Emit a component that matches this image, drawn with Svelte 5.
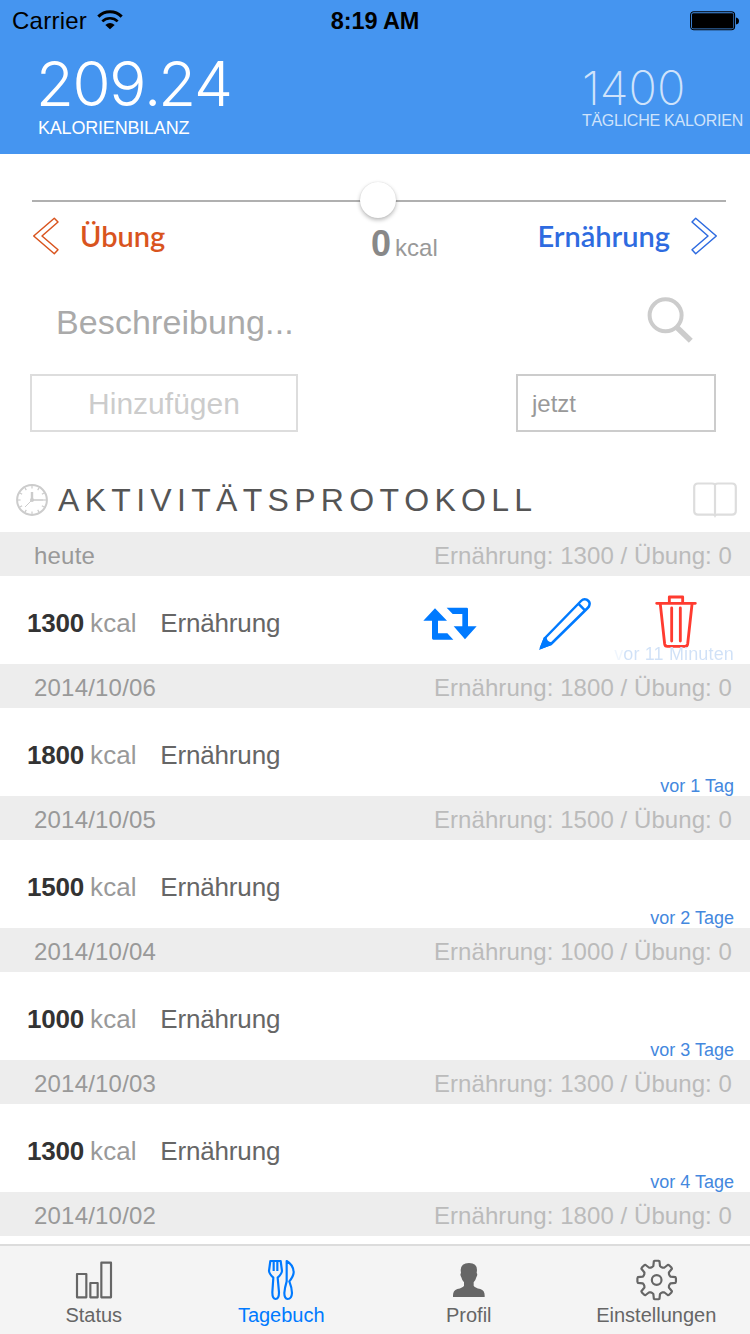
<script>
  const days = [
    { date: 'heute', total: 1300, ago: 'vor 11 Minuten', open: true },
    { date: '2014/10/06', total: 1800, ago: 'vor 1 Tag' },
    { date: '2014/10/05', total: 1500, ago: 'vor 2 Tage' },
    { date: '2014/10/04', total: 1000, ago: 'vor 3 Tage' },
    { date: '2014/10/03', total: 1300, ago: 'vor 4 Tage' },
    { date: '2014/10/02', total: 1800, ago: '' }
  ];
  const ticks = Array.from({ length: 12 }, (_, i) => i * 30);

  // Eight-toothed gear outline, described by points per tooth (radius, angle offset).
  const tooth = [[41, -19], [43, -13.5], [57, -8.5], [58, -5], [58, 5], [57, 8.5], [43, 13.5], [41, 19]];
  const gear = 'M' + Array.from({ length: 8 }, (_, i) =>
    tooth.map(([r, a]) => {
      const t = ((i * 45 + a) * Math.PI) / 180;
      return (60 + r * Math.sin(t)).toFixed(1) + ' ' + (60 - r * Math.cos(t)).toFixed(1);
    }).join('L')
  ).join('L') + 'Z';
</script>

<div class="screen">
  <header>
    <div class="status">
      <div class="carrier">
        <span>Carrier</span>
        <svg width="26" height="20" viewBox="0 0 78 60">
          <path d="M4 20A49 49 0 0 1 74 20" fill="none" stroke="#000" stroke-width="9" />
          <path d="M16 34A33 33 0 0 1 62 34" fill="none" stroke="#000" stroke-width="8" />
          <path d="M25 45Q39 33 53 45L39 58Z" />
        </svg>
      </div>
      <span class="clock">8:19 AM</span>
      <svg class="battery" width="50" height="20" viewBox="0 0 50 20">
        <rect x=".6" y=".8" width="44" height="18" rx="3.2" fill="none" stroke="#000" stroke-width="1.1" />
        <rect x="2" y="2.2" width="41.4" height="15.4" rx="1.4" />
        <path d="M46 6.5Q49 7 49 10Q49 13 46 13.5Z" />
      </svg>
    </div>
    <div class="totals">
      <div class="balance">
        <strong>209.24</strong>
        <span>KALORIENBILANZ</span>
      </div>
      <div class="daily">
        <strong>1400</strong>
        <span>TÄGLICHE KALORIEN</span>
      </div>
    </div>
  </header>

  <section class="entry">
    <div class="slider"><i></i></div>
    <div class="modes">
      <div class="mode exercise">
        <svg width="28" height="38" viewBox="0 0 28 38"><path d="M1.7 19L22.3 1.3L26 5L10 19L26 32.8L22.3 36.7Z" /></svg>
        <span>Übung</span>
      </div>
      <div class="amount"><b>0</b><span>kcal</span></div>
      <div class="mode food">
        <span>Ernährung</span>
        <svg width="28" height="38" viewBox="0 0 28 38"><path d="M26.3 19L5.7 1.3L2 5L18 19L2 32.8L5.7 36.7Z" /></svg>
      </div>
    </div>
    <div class="search">
      <span>Beschreibung...</span>
      <svg width="46" height="46" viewBox="0 0 46 46" fill="none" stroke="#ccc">
        <circle cx="18.6" cy="18.3" r="16" stroke-width="4" />
        <path d="M29.5 30L43.8 43.8" stroke-width="5.6" />
      </svg>
    </div>
    <div class="actions">
      <button class="add">Hinzufügen</button>
      <div class="when">jetzt</div>
    </div>
  </section>

  <div class="title">
    <svg width="32" height="32" viewBox="0 0 32 32" fill="none" stroke="#ccc">
      <circle cx="16" cy="16" r="14.9" stroke-width="2" />
      {#each ticks as a}
        <path d="M16 2V4.6" stroke-width="1.2" transform={`rotate(${a} 16 16)`} />
      {/each}
      <path d="M16 8V16" stroke-width="2.4" />
      <path d="M16 16H27.5" stroke-width="1.6" />
      <path d="M16 16L9 23" stroke-width="1" />
      <circle cx="16" cy="16" r="2" fill="#ccc" stroke="none" />
    </svg>
    <h1>AKTIVITÄTSPROTOKOLL</h1>
    <svg class="book" width="44" height="36" viewBox="0 0 44 36" fill="none" stroke="#ddd" stroke-width="2.2">
      <path d="M22 2.6Q21 1.5 19 1.5H5Q1.2 1.5 1.2 5.3V29Q1.2 32.6 5 32.6H20Q21.5 32.6 22 33.6Q22.5 32.6 24 32.6H39Q42.8 32.6 42.8 29V5.3Q42.8 1.5 39 1.5H25Q23 1.5 22 2.6V34" />
    </svg>
  </div>

  <main>
    {#each days as day}
      <div class="day">
        <span class="date">{day.date}</span>
        <span class="sum">Ernährung: {day.total} / Übung: 0</span>
      </div>
      {#if day.ago}
        <div class="row">
          <b>{day.total}</b><span class="unit">kcal</span><span class="kind">Ernährung</span>
          {#if day.open}
            <div class="tools">
              <svg width="54" height="34" viewBox="69 82 162 102" fill="#007aff">
                <path d="M105 86L70 123H96V176Q96 180 100 180H160L142 161H114V123H141Z" />
                <path d="M140 84H200Q204 84 204 88V140H230L195 179L161 140H187V103H158Z" />
              </svg>
              <svg width="54" height="54" viewBox="411 51 162 162" fill="none" stroke="#007aff" stroke-width="7.5" stroke-linejoin="round">
                <path d="M420 203L432 174L540 63Q548 55 557 59Q569 66 565 76Q564 80 560 84L450 192Z" />
                <path d="M532 71L552 91" />
                <path d="M414 210L429 171L437 171Q437 186 452 187L451 195Z" fill="#007aff" stroke="none" />
              </svg>
              <svg class="bin" width="42" height="54" viewBox="765 46 126 162" fill="none" stroke="#ff3b30" stroke-width="8.5" stroke-linecap="round" stroke-linejoin="round">
                <path d="M770 71H886M808 70V52H848V70" />
                <path d="M781 74L794 193Q795 200 802 200H855Q862 200 863 193L876 74" />
                <path d="M815 85V184M841 85V184" />
              </svg>
            </div>
          {/if}
          <span class="ago" class:faded={day.open}>{day.ago}</span>
        </div>
      {/if}
    {/each}
  </main>

  <nav>
    <div class="tab">
      <svg width="40" height="40" viewBox="222 210 120 120" fill="none" stroke="#666" stroke-width="6.5" stroke-linejoin="round">
        <path d="M231 252H259V322H231ZM271 279H293V322H271ZM304 218H333V322H304Z" />
      </svg>
      <span>Status</span>
    </div>
    <div class="tab active">
      <svg width="40" height="40" viewBox="784 210 120 120" fill="none" stroke="#007aff" stroke-width="6.5" stroke-linejoin="round">
        <path d="M812 213H843L847 243Q846 252 834 263L838 307Q838 327 828 327Q818 327 818 307L821 263Q809 252 808 243Z" />
        <path d="M822 213V243M833 213V243" />
        <path d="M861 213Q882 225 882 248Q881 260 869 274Q877 294 877 309Q876 327 864 327Q854 326 854 309Q855 294 861 274Z" />
      </svg>
      <span>Tagebuch</span>
    </div>
    <div class="tab">
      <svg width="40" height="40" viewBox="222 210 120 120" fill="#666">
        <path d="M282 219Q306 219 306 240L305 249Q309 253 304 262Q302 271 296 277V287Q299 293 316 297Q330 301 329 320Q329 321 327 321H236Q234 321 234 320Q233 301 247 297Q264 293 267 287V277Q261 271 259 262Q254 253 258 249L257 240Q258 219 282 219Z" />
      </svg>
      <span>Profil</span>
    </div>
    <div class="tab">
      <svg width="40" height="40" viewBox="-2 0 120 120" fill="none" stroke="#666" stroke-width="6.5" stroke-linejoin="round">
        <path d={gear} />
        <circle cx="60" cy="60" r="14.5" />
      </svg>
      <span>Einstellungen</span>
    </div>
  </nav>
</div>

<style>
  :global(body) { margin: 0; background: #fff; }
  .screen {
    width: 750px;
    height: 1334px;
    overflow: hidden;
    display: flex;
    flex-direction: column;
    font-family: "Liberation Sans", Arial, sans-serif;
    background: #fff;
  }
  svg { display: block; flex: none; overflow: visible; }
  header { height: 154px; flex: none; background: #4595f0; color: #fff; }
  .status {
    height: 40px;
    box-sizing: border-box;
    padding: 2px 10px 0 12px;
    display: grid;
    grid-template-columns: 1fr auto 1fr;
    align-items: center;
    color: #000;
    font-size: 24px;
  }
  .carrier { display: flex; align-items: center; gap: 10px; letter-spacing: 0.25px; }
  .carrier svg { margin-top: -2px; }
  .clock { font-weight: 700; letter-spacing: -0.1px; font-size: 23.5px; margin-left: -2px; }
  .battery { justify-self: end; margin-top: -1px; }
  .totals { display: flex; justify-content: space-between; padding: 0 7px 0 38px; }
  .totals div { display: flex; flex-direction: column; }
  .totals strong { font-family: Inter, "Liberation Sans", sans-serif; font-weight: 300; }
  .balance strong { font-size: 62px; line-height: 62px; letter-spacing: -3.7px; padding-top: 13px; margin-left: -3px; font-variant-numeric: tabular-nums; }
  .balance span { font-size: 18px; line-height: 24px; letter-spacing: -0.2px; margin-top: 1px; }
  .daily { color: #cfe3fb; }
  .daily strong { font-size: 47px; line-height: 48px; letter-spacing: 0; padding-top: 24px; font-weight: 200; }
  .daily span { font-size: 16px; line-height: 20px; letter-spacing: -0.25px; margin-top: -1px; }

  .entry { height: 318px; flex: none; padding: 0 30px; box-sizing: border-box; }
  .slider { height: 64px; padding-top: 28px; box-sizing: border-box; display: grid; justify-items: center; margin: 0 -6px 0 2px; }
  .slider::before { content: ""; grid-area: 1 / 1; width: 694px; height: 2px; background: #b0b0b0; margin-top: 18px; }
  .slider i {
    grid-area: 1 / 1;
    width: 36px;
    height: 36px;
    border-radius: 50%;
    background: #fff;
    box-shadow: 0 2px 4px rgba(0, 0, 0, 0.28), 0 0 1px rgba(0, 0, 0, 0.15);
    position: relative;
    left: -1px;
  }
  .modes { display: grid; grid-template-columns: 339px auto 1fr; align-items: start; height: 38px; padding: 0 2px; margin-top: -1px; }
  .mode { display: flex; align-items: center; gap: 20px; height: 38px; font: 600 29px/38px Lato, sans-serif; }
  .mode path { fill: none; stroke: currentColor; stroke-width: 1.5; stroke-linejoin: round; }
  .exercise { color: #d9541e; }
  .food { color: #2e6be0; justify-content: flex-end; }
  .amount { display: flex; align-items: baseline; gap: 4px; line-height: 54px; color: #999; font-size: 24px; }
  .amount b { font-size: 36px; color: #888; }
  .search { display: flex; justify-content: space-between; align-items: center; padding: 0 27px 0 26px; height: 46px; margin-top: 42px; color: #aaa; font-size: 34px; }
  .search span { padding-top: 4px; letter-spacing: 0.1px; }
  .actions { display: flex; justify-content: space-between; padding-right: 4px; margin-top: 31px; }
  .add, .when { box-sizing: border-box; height: 58px; border: 2px solid #ddd; background: #fff; font-family: inherit; line-height: 56px; padding: 0; }
  .add { width: 268px; font-size: 30px; color: #ccc; }
  .when { width: 200px; border-color: #ccc; padding-left: 14px; font-size: 24px; color: #999; }

  .title { height: 60px; flex: none; display: flex; align-items: center; padding: 0 13px 5px 16px; box-sizing: border-box; }
  .title h1 { margin: 1px 0 0 10px; font-size: 32px; font-weight: 400; letter-spacing: 5.3px; font-kerning: none; color: #555; line-height: 40px; }
  .book { margin-left: auto; }

  main { flex: 1; min-height: 0; overflow: hidden; }
  .day { height: 44px; background: #ededed; display: flex; justify-content: space-between; padding: 0 18px 0 34px; font-size: 24px; line-height: 47px; color: #999; }
  .date { letter-spacing: 0.2px; }
  .sum { color: #bbb; letter-spacing: 0.07px; }
  .row { height: 88px; position: relative; display: flex; padding-left: 27px; font-size: 26px; line-height: 94px; }
  .row b { color: #333; letter-spacing: -0.2px; }
  .unit { color: #999; margin-left: 6px; letter-spacing: 0.1px; }
  .kind { color: #666; margin-left: 23.5px; letter-spacing: -0.15px; }
  .tools { display: flex; align-items: center; gap: 61px; margin: 4px 53px 0 auto; height: 88px; }
  .tools svg:nth-child(-n+2) { margin-left: -2px; margin-right: 2px; }
  .tools .bin { margin-bottom: 4px; }
  .ago { position: absolute; right: 16px; bottom: 0; font-size: 18px; line-height: 20px; color: #4488de; }
  .faded { color: transparent; background: linear-gradient(90deg, #eff5fd 0 9px, #d0e1f7 10px); background-clip: text; -webkit-background-clip: text; letter-spacing: 0.15px; }

  nav { height: 90px; flex: none; box-sizing: border-box; border-top: 2px solid #dcdcdc; background: #f4f4f4; display: grid; grid-template-columns: repeat(4, 187.5px); }
  .tab { display: flex; flex-direction: column; align-items: center; padding-top: 14px; color: #666; font-size: 20px; line-height: 24px; }
  .tab span { margin-top: 3px; white-space: nowrap; }
  .active { color: #007aff; }
</style>
